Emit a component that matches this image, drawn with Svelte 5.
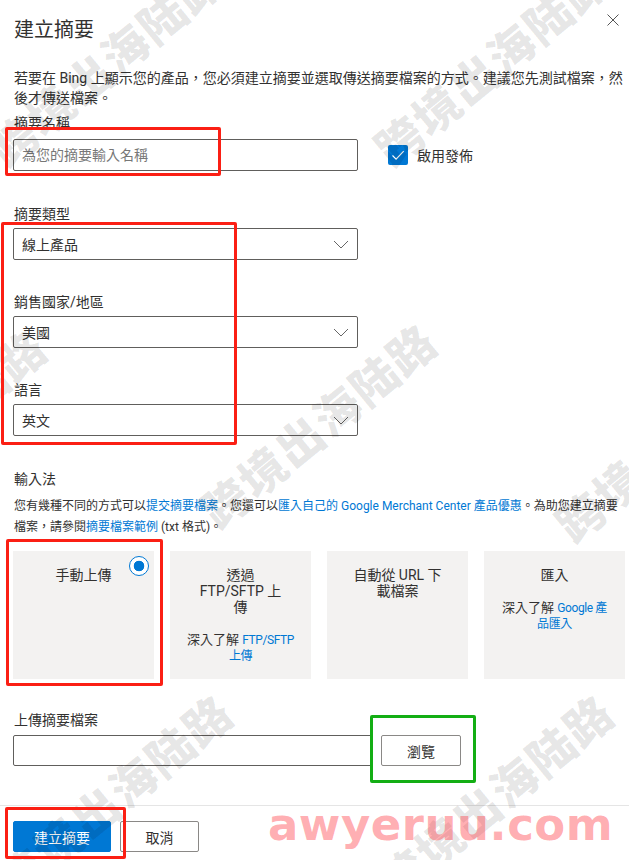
<script>
	const fields = [
		{ label: '摘要類型', value: '線上產品' },
		{ label: '銷售國家/地區', value: '美國' },
		{ label: '語言', value: '英文' }
	];

	// Watermark stamps sit on the page at free positions, centre of the text.
	const stamps = [
		[108, 65],
		[494, 65],
		[320, 427],
		[-70, 433],
		[675, 441],
		[116, 798],
		[497, 798]
	];
</script>

<div class="dialog">
	<header class="head">
		<h1>建立摘要</h1>
		<button class="close" aria-label="關閉">
			<svg width="12" height="12" viewBox="0 0 12 12"><path d="M.5.5l11 11M11.5.5l-11 11" stroke="#555" fill="none" /></svg>
		</button>
	</header>

	<p class="intro">若要在 Bing 上顯示您的產品，您必須建立摘要並選取傳送摘要檔案的方式。建議您先測試檔案，然後才傳送檔案。</p>

	<label class="label name-label" for="feed-name">摘要名稱</label>
	<div class="name-row">
		<input id="feed-name" class="box" placeholder="為您的摘要輸入名稱" />
		<span class="check">
			<svg width="20" height="20" viewBox="0 0 20 20"><path d="M4.5 10.5l3.6 3.6 7.6-8" stroke="#fff" stroke-width="1.2" fill="none" /></svg>
		</span>
		<span class="check-label">啟用發佈</span>
	</div>

	{#each fields as f}
		<div class="field">
			<div class="label">{f.label}</div>
			<div class="box select">
				<span>{f.value}</span>
				<svg width="16" height="9" viewBox="0 0 16 9"><path d="M1 1l7 7 7-7" stroke="#666" fill="none" /></svg>
			</div>
		</div>
	{/each}

	<div class="label method">輸入法</div>
	<p class="note">您有幾種不同的方式可以<a href="#a">提交摘要檔案</a>。您還可以<a href="#a">匯入自己的 Google Merchant Center 產品優惠</a>。為助您建立摘要檔案，請參閱<a href="#a">摘要檔案範例</a> (txt 格式)。</p>

	<div class="cards">
		<div class="card">
			<span class="radio"></span>
			<div class="card-title">手動上傳</div>
		</div>
		<div class="card">
			<div class="card-title">透過<br />FTP/SFTP 上<br />傳</div>
			<div class="card-sub">深入了解 <a href="#a">FTP/SFTP 上傳</a></div>
		</div>
		<div class="card">
			<div class="card-title">自動從 URL 下載檔案</div>
		</div>
		<div class="card">
			<div class="card-title">匯入</div>
			<div class="card-sub">深入了解 <a href="#a">Google 產品匯入</a></div>
		</div>
	</div>

	<div class="label upload-label">上傳摘要檔案</div>
	<div class="upload">
		<div class="box file"></div>
		<button class="btn browse">瀏覽</button>
	</div>

	<footer class="foot">
		<button class="btn primary">建立摘要</button>
		<button class="btn">取消</button>
	</footer>

	{#each stamps as [x, y]}
		<span class="stamp" style="left:{x}px;top:{y}px">跨境出海陆路</span>
	{/each}

	<span class="mark red r1"></span>
	<span class="mark red r2"></span>
	<span class="mark red r3"></span>
	<span class="mark red r4"></span>
	<span class="mark green"></span>
	<span class="brand">awyeruu.com</span>
</div>

<style>
	:global(body) {
		margin: 0;
		background: #fff;
	}
	.dialog {
		position: relative;
		width: 629px;
		height: 860px;
		overflow: hidden;
		box-sizing: border-box;
		padding: 0 4px 0 13px;
		font-family: Roboto, "Noto Sans CJK TC", sans-serif;
		font-size: 14px;
		color: #323130;
	}
	.head {
		display: flex;
		justify-content: space-between;
		height: 68px;
	}
	h1 {
		margin: 16px 0 0 1px;
		font-size: 20px;
		line-height: 28px;
		font-weight: 400;
	}
	.close {
		border: 0;
		background: none;
		padding: 0;
		margin: 14px 6px 0 0;
		height: 12px;
		display: flex;
	}
	.intro {
		margin: 0 0 0 1px;
		line-height: 20px;
		width: 610px;
	}
	.label {
		line-height: 18px;
		margin-left: 1px;
	}
	.name-label {
		display: block;
		margin-top: 6px;
		margin-bottom: 7px;
	}
	.box {
		box-sizing: border-box;
		height: 32px;
		width: 345px;
		border: 1px solid #605e5c;
		border-radius: 2px;
		background: transparent;
	}
	input.box {
		padding: 0 8px;
		font: inherit;
		outline: none;
	}
	input.box::placeholder {
		color: #777;
	}
	.name-row {
		display: flex;
		align-items: center;
	}
	.check {
		width: 20px;
		height: 20px;
		margin-left: 30px;
		border-radius: 2px;
		background: #0078d4;
		display: flex;
	}
	.check-label {
		margin-left: 9px;
	}
	.field {
		margin-top: 32px;
	}
	.name-row + .field {
		margin-top: 34px;
	}
	.field .label {
		margin-bottom: 5px;
	}
	.field + .field .label {
		margin-bottom: 5px;
	}
	.field + .field {
		margin-top: 33px;
	}
	.select {
		display: flex;
		align-items: center;
		justify-content: space-between;
		padding: 0 8px;
	}
	.method {
		margin-top: 34px;
	}
	.note {
		margin: 8px 0 0 1px;
		width: 606px;
		font-size: 12px;
		line-height: 21px;
	}
	a {
		color: #0078d4;
		text-decoration: none;
	}
	.cards {
		display: grid;
		grid-template-columns: repeat(4, 141px);
		column-gap: 16px;
		margin-top: 13px;
	}
	.card {
		position: relative;
		box-sizing: border-box;
		height: 128px;
		padding: 16px 20px;
		background: #f3f2f1;
		text-align: center;
	}
	.card-title {
		line-height: 16px;
	}
	.card-sub {
		margin: 17px -5px 0;
		font-size: 13px;
		line-height: 16px;
	}
	.card-sub a {
		font-size: 12px;
		letter-spacing: -0.4px;
	}
	.radio {
		position: absolute;
		top: 5px;
		right: 5px;
		box-sizing: border-box;
		width: 20px;
		height: 20px;
		border: 1px solid #0078d4;
		border-radius: 50%;
		background: radial-gradient(circle, #0078d4 0 5px, #fff 5.6px);
	}
	.upload-label {
		margin-top: 32px;
		margin-bottom: 6px;
	}
	.upload {
		display: flex;
		gap: 9px;
	}
	.file {
		width: 359px;
		height: 31px;
	}
	.btn {
		box-sizing: border-box;
		width: 79px;
		height: 31px;
		border: 1px solid #8a8886;
		border-radius: 2px;
		background: transparent;
		padding: 0;
		font: inherit;
		color: #323130;
	}
	.browse {
		width: 80px;
	}
	.foot {
		display: flex;
		gap: 9px;
		margin: 39px -4px 0 -13px;
		padding: 15px 0 0 13px;
		border-top: 1px solid #e5e5e5;
	}
	.primary {
		width: 98px;
		background: #0078d4;
		border-color: #0078d4;
		color: #fff;
	}
	.stamp {
		position: absolute;
		transform: translate(-50%, -50%) rotate(-39.5deg);
		font-size: 46px;
		font-weight: 900;
		line-height: 1;
		letter-spacing: 2px;
		white-space: nowrap;
		color: rgba(0, 0, 0, 0.1);
		pointer-events: none;
	}
	.mark {
		position: absolute;
		box-sizing: border-box;
		border: 3px solid;
		border-radius: 2px;
	}
	.red {
		border-color: #fb1f14;
	}
	.green {
		left: 370px;
		top: 715px;
		width: 106px;
		height: 68px;
		border-color: #13ae14;
	}
	.r1 {
		left: 5px;
		top: 127px;
		width: 216px;
		height: 49px;
	}
	.r2 {
		left: 1px;
		top: 222px;
		width: 236px;
		height: 223px;
	}
	.r3 {
		left: 6px;
		top: 539px;
		width: 157px;
		height: 147px;
	}
	.r4 {
		left: 5px;
		top: 807px;
		width: 121px;
		height: 52px;
	}
	.brand {
		position: absolute;
		left: 268px;
		top: 798px;
		font-family: "DejaVu Sans", sans-serif;
		font-size: 45px;
		font-weight: 700;
		line-height: 54px;
		letter-spacing: 0.5px;
		color: rgba(255, 60, 70, 0.42);
		white-space: nowrap;
	}
</style>
